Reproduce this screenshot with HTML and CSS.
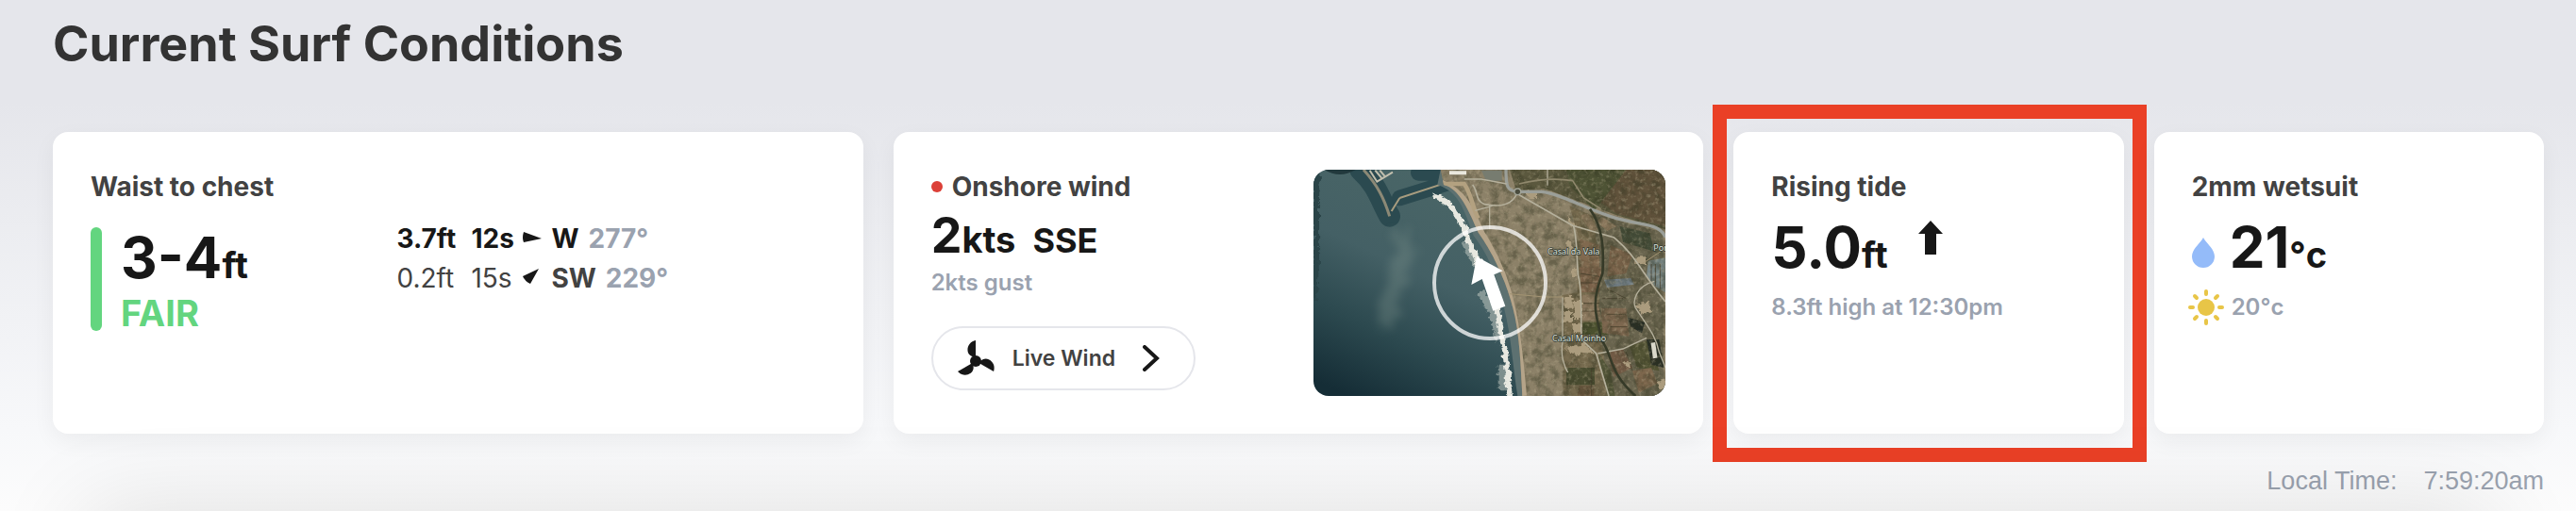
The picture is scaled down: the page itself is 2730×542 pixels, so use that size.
FILE: index.html
```html
<!DOCTYPE html>
<html lang="en">
<head>
  <meta charset="UTF-8">
  <meta name="viewport" content="width=device-width, initial-scale=1.0">
  <title>Current Surf Conditions</title>
  <link rel="stylesheet" href="styles.css">
</head>
<body>
<main class="conditions">
  <h1 class="page-title">Current Surf Conditions</h1>

  <div class="cards">
    <!-- Surf height -->
    <section class="card card-wide surf">
      <h2 class="card-title">Waist to chest</h2>
      <div class="surf-body">
        <div class="rating">
          <div class="rating-bar"></div>
          <div>
            <div class="reading">3-4<span class="unit">ft</span></div>
            <div class="rating-label">FAIR</div>
          </div>
        </div>
        <ul class="swells">
          <li class="swell primary">
            <span class="swell-height">3.7ft</span>
            <span class="swell-period">12s</span>
            <svg class="swell-arrow" viewBox="0 0 20 20"><path d="M1 4 L20 11 L1 15 Q-1 10 1 4Z"/></svg>
            <span class="swell-dir">W</span>
            <span class="degrees">277°</span>
          </li>
          <li class="swell">
            <span class="swell-height">0.2ft</span>
            <span class="swell-period">15s</span>
            <svg class="swell-arrow" viewBox="0 0 20 20"><path d="M17 1 L8 17 Q2 14 0 9Z"/></svg>
            <span class="swell-dir">SW</span>
            <span class="degrees">229°</span>
          </li>
        </ul>
      </div>
    </section>

    <!-- Wind -->
    <section class="card card-wide wind">
      <div class="wind-info">
        <h2 class="card-title"><span class="dot"></span>Onshore wind</h2>
        <div class="wind-reading">2<span class="unit">kts</span><span class="wind-dir">SSE</span></div>
        <div class="detail">2kts gust</div>
        <button class="live-wind" type="button">
          <svg class="fan" viewBox="0 0 40 38">
            <circle cx="19" cy="22" r="6"/>
            <path id="blade" d="M19 22 V0 C14 1 10 5 10.500 11 C11 15 14 17 17 17.500Z"/>
            <use href="#blade" transform="rotate(120 19 22)"/>
            <use href="#blade" transform="rotate(240 19 22)"/>
          </svg>
          Live Wind
          <svg class="chevron" viewBox="0 0 18 28"><path d="M2 2 L15 14 L2 26"/></svg>
        </button>
      </div>

      <svg class="map" viewBox="66 60 1119 720" preserveAspectRatio="xMidYMid slice">
        <defs>
          <linearGradient id="sea" x1="0.75" y1="0.1" x2="0.1" y2="1">
            <stop offset="0" stop-color="#4c6867"/>
            <stop offset="0.5" stop-color="#446065"/>
            <stop offset="0.75" stop-color="#2c494f"/>
            <stop offset="1" stop-color="#152d36"/>
          </linearGradient>
          <filter id="grain" x="0" y="0" width="100%" height="100%" color-interpolation-filters="sRGB">
            <feTurbulence type="fractalNoise" baseFrequency="0.035" numOctaves="4" seed="4"/>
            <feColorMatrix values="0 0 0 0 0.2  0 0 0 0 0.21  0 0 0 0 0.13  3 0 0 0 -1.2"/>
          </filter>
          <filter id="speckle" x="0" y="0" width="100%" height="100%" color-interpolation-filters="sRGB">
            <feTurbulence type="fractalNoise" baseFrequency="0.08" numOctaves="3" seed="9"/>
            <feColorMatrix values="0 0 0 0 0.74  0 0 0 0 0.7  0 0 0 0 0.58  0 3 0 0 -1.5"/>
          </filter>
          <filter id="rough" x="-20%" y="-20%" width="140%" height="140%" color-interpolation-filters="sRGB">
            <feTurbulence type="fractalNoise" baseFrequency="0.06" numOctaves="3" seed="2"/>
            <feDisplacementMap in="SourceGraphic" scale="22" xChannelSelector="R" yChannelSelector="G"/>
          </filter>
          <filter id="haze" x="-100%" y="-30%" width="300%" height="160%" color-interpolation-filters="sRGB">
            <feTurbulence type="fractalNoise" baseFrequency="0.03" numOctaves="4" seed="7"/>
            <feDisplacementMap in="SourceGraphic" scale="90" xChannelSelector="R" yChannelSelector="G"/>
            <feGaussianBlur stdDeviation="14"/>
          </filter>
          <clipPath id="land">
            <path d="M470 60 L480 108 C530 120 560 190 590 260 C640 330 680 420 700 500 C722 580 725 690 730 780 H1185 V60Z"/>
          </clipPath>
        </defs>

        <!-- Sea and harbour -->
        <rect x="66" y="60" width="1119" height="720" fill="url(#sea)"/>
        <path d="M66 60 H88 C78 200 92 320 76 480 H66Z" fill="#2a4448" filter="url(#rough)"/>
        <path d="M215 60 C270 110 280 160 308 208" fill="none" stroke="#2b4a50" stroke-width="68" stroke-linecap="round"/>
        <path d="M340 150 L500 100 M400 70 H470" fill="none" stroke="#2b4a50" stroke-width="50" stroke-linecap="round"/>
        <path d="M100 60 Q150 90 200 60Z" fill="#22393d"/>
        <path d="M225 60 C270 110 290 150 308 208" fill="none" stroke="#8c8976" stroke-width="9"/>
        <path d="M245 62 L268 98 L318 68 M262 62 L282 86 M277 62 L292 80" fill="none" stroke="#c2bfae" stroke-width="6"/>
        <path d="M340 150 L480 104 L560 84 M340 150 L314 192" fill="none" stroke="#a79c7f" stroke-width="6"/>
        <path d="M350 250 C370 320 330 400 310 480 C300 520 300 540 290 560" fill="none" stroke="#8da096" stroke-width="56" opacity="0.28" filter="url(#haze)"/>

        <!-- Land -->
        <path d="M470 60 L460 108 C530 130 545 190 575 270 C630 340 655 420 672 500 C695 590 700 690 715 780 H1185 V60Z" fill="#5d7171"/>
        <g clip-path="url(#land)">
          <rect x="460" y="60" width="725" height="720" fill="#8c8168"/>
          <path d="M690 60 H1185 V250 L1030 205 L800 120 L710 125Z" fill="#5b583e"/>
          <path d="M890 100 L1050 60 H1185 V240 L1030 200Z" fill="#60523b"/>
          <path d="M870 60 L1060 60 L960 190 L880 110Z" fill="#4e5335"/>
          <path d="M880 175 L960 210 L985 290 L985 600 L1010 780 H860 L855 460 L905 450 V260Z" fill="#766a4e"/>
          <path d="M960 200 L1180 260 V780 H1010 L980 600Z" fill="#69644e"/>

          <!-- Fields -->
          <path d="M1040 240 L1135 262 L1150 320 L1050 290Z" fill="#434b37"/>
          <path d="M912 280 L975 300 V370 H915Z" fill="#80694f"/>
          <path d="M912 370 L985 370 L975 450 H918Z" fill="#7b624a"/>
          <path d="M920 460 L960 455 L985 540 H922Z" fill="#8a775d"/>
          <path d="M922 545 L1000 545 V585 H922Z" fill="#4b512f"/>
          <path d="M1010 300 L1080 330 L1060 390 L1000 400Z" fill="#7b644b"/>
          <path d="M980 500 L1060 500 L1070 590 L985 580Z" fill="#7d674f"/>
          <path d="M1000 640 L1050 630 L1080 690 L1020 720Z" fill="#715a45"/>
          <path d="M1070 620 L1140 600 L1165 700 L1095 690Z" fill="#525334"/>
          <path d="M1080 700 L1140 690 L1160 740 L1100 770Z" fill="#7d674d"/>
          <path d="M870 690 L960 690 V745 H870Z" fill="#4a4d31"/>
          <path d="M910 748 H958 V780 H905Z" fill="#64533b"/>
          <path d="M970 640 L1010 700 L1025 780 H1000Z" fill="#535639"/>
          <path d="M940 200 L970 250 L945 255 L915 205Z M985 210 L1030 240 L1000 255 L965 225Z" fill="#8a775c"/>
          <path d="M1130 350 L1185 340 V450 L1150 430 L1125 400Z" fill="#798786"/>
          <path d="M990 410 L1075 405 L1085 425 L1000 435Z" fill="#75828a"/>
          <path d="M1065 530 L1120 545 L1110 580 L1075 560Z M1125 600 L1165 600 L1180 690 L1140 680Z" fill="#282e25"/>
          <g stroke="#463f2c" stroke-width="3" opacity="0.8">
            <path d="M920 485 H975 M920 510 H980 M985 470 H1050 M1000 520 H1060 M1010 560 H1065 M915 390 L975 400 M915 420 H970 M950 690 V780 M1060 640 L1080 700 M1000 440 L1060 470 M1140 360 V430 M1153 360 V430 M1168 360 V440"/>
          </g>

          <rect x="460" y="60" width="725" height="720" filter="url(#grain)" opacity="0.4"/>
          <rect x="460" y="60" width="725" height="720" filter="url(#speckle)" opacity="0.35"/>
          <rect x="1142" y="610" width="14" height="50" fill="#d9d8ca" transform="rotate(-8 1149 635)"/>

          <!-- Beach -->
          <path d="M470 108 C545 140 560 190 595 265 C640 335 675 420 692 500 C712 590 720 690 728 780" fill="none" stroke="#b5a489" stroke-width="32"/>
          <path d="M480 105 H545 C570 140 570 180 590 215" fill="none" stroke="#b3a180" stroke-width="14"/>

          <!-- Villages -->
          <g fill="#ab9c7e">
            <path d="M865 465 H890 V500 H865Z M893 480 H918 V535 H893Z M862 510 H888 V545 H862Z M890 550 H915 V580 H890Z M865 630 L930 615 L960 640 L900 650Z M888 375 H902 V400 H888Z M874 290 H886 V330 H874Z M870 200 L900 240 L885 245Z M1090 340 H1125 V358 H1090Z M1090 490 L1130 480 L1145 510 L1110 520Z M1055 670 H1075 V690 H1055Z M740 130 H780 V150 H750Z M1160 735 L1185 725 V755 H1165Z" filter="url(#rough)"/>
          </g>
          <path d="M498 64 H552 V76 H498Z" fill="#e9e7dd"/>
          <path d="M600 62 L615 95 H665 V62Z" fill="#777c70"/>

          <!-- Roads -->
          <g fill="none" stroke="#b5b09c">
            <path d="M678 60 C678 110 680 128 715 130 H790 C850 135 930 185 1030 215 C1120 240 1165 230 1185 275" stroke="#9b9f99" stroke-width="10"/>
            <path d="M715 130 C700 175 660 180 610 170 C580 160 590 130 572 108 M720 140 L890 238 L1020 275 C1090 330 1110 390 1185 480" stroke-width="5"/>
            <path d="M626 172 V250 M580 190 L635 175 M810 60 V110 M545 90 H600 L680 105" stroke-width="4"/>
            <path d="M720 105 C800 85 860 90 890 95 L925 150 L980 185" stroke="#90886d" stroke-width="5"/>
            <path d="M893 240 C905 280 903 360 908 400 C922 450 915 540 918 600 L965 645 L1005 780" stroke-width="5"/>
            <path d="M858 465 V610 C850 650 865 690 875 705 M970 645 L1050 630 L1125 595 M1150 415 C1090 430 1080 480 1090 500 C1130 560 1155 590 1165 640 L1185 690" stroke-width="4"/>
            <path d="M690 455 L800 465 H860 M1110 360 L1185 310" stroke="#a39473" stroke-width="3"/>
            <path d="M945 185 C985 240 990 310 985 390 C940 500 975 540 980 600 C1020 650 1000 700 1090 780" stroke="#363a28" stroke-width="8"/>
          </g>
          <circle cx="715" cy="130" r="10" fill="#4a4c3e" stroke="#a3a598" stroke-width="4"/>
        </g>

        <!-- Surf line -->
        <path d="M550 290 Q570 340 600 380 M595 450 Q640 500 655 600 M665 680 V760" fill="none" stroke="#c9cfc7" stroke-width="24" opacity="0.5" filter="url(#rough)"/>
        <path d="M445 145 C500 155 525 200 545 250 C565 310 590 350 620 410 C655 480 655 550 672 620 C685 680 680 730 692 790" fill="none" stroke="#e7e8e0" stroke-width="18" filter="url(#rough)"/>

        <g class="map-label">
          <text x="810" y="330">Casal da Vala</text>
          <text x="825" y="605">Casal Moinho</text>
          <text x="1147" y="317">Por</text>
        </g>

        <!-- Wind direction -->
        <circle cx="627" cy="420" r="177" fill="none" stroke="#fff" stroke-opacity="0.75" stroke-width="12"/>
        <path d="M585 337 L668 382 L640 394 L676 494 L637 509 L602 408 L568 426Z" fill="#fff"/>
      </svg>
    </section>

    <!-- Tide -->
    <section class="card tide">
      <h2 class="card-title">Rising tide</h2>
      <div class="reading">5.0<span class="unit">ft</span>
        <svg class="tide-arrow" viewBox="0 0 26 36"><path d="M13 0 L26 14 H19 V36 H7 V14 H0Z"/></svg>
      </div>
      <div class="detail">8.3ft high at 12:30pm</div>
      <div class="callout"></div>
    </section>

    <!-- Temperature -->
    <section class="card temperature">
      <h2 class="card-title">2mm wetsuit</h2>
      <div class="reading">
        <svg class="drop" viewBox="0 0 24 32"><path d="M12 0 C15 6 24 12 24 20 A12 12 0 0 1 0 20 C0 12 9 6 12 0Z"/></svg>
        21<span class="unit">°c</span>
      </div>
      <div class="detail">
        <svg class="sun" viewBox="0 0 38 38">
          <circle cx="19" cy="19" r="9"/>
          <path d="M19 2 V5 M19 33 V36 M2 19 H5 M33 19 H36 M7 7 L9 9 M29 29 L31 31 M7 31 L9 29 M29 9 L31 7"/>
        </svg>
        20°c
      </div>
    </section>
  </div>

  <div class="local-time"><span>Local Time:</span><time>7:59:20am</time></div>
</main>
</body>
</html>
```
FILE: styles.css
```css
* {
  box-sizing: border-box;
}
body {
  margin: 0;
  font-family: Inter, "Liberation Sans", sans-serif;
  color: #171717;
}
.conditions {
  position: relative;
  overflow: hidden;
  padding: 17px 34px 14px 56px;
  background: linear-gradient(to bottom, #e5e6eb 0%, #e5e6eb 20%, #f7f8fa 84%, #fcfcfc 100%);
}
/* shadow cast upwards by the section that follows */
.conditions::after {
  content: '';
  position: absolute;
  top: 100%;
  left: 90px;
  right: 90px;
  height: 200px;
  box-shadow: 0 0 100px rgba(0, 0, 0, 0.12);
}
.page-title {
  margin: 0 0 63px;
  font-size: 52px;
  line-height: 60px;
  font-weight: 700;
  color: #333;
}
.cards {
  display: grid;
  grid-template-columns: repeat(6, 1fr);
  gap: 32px;
}
.card {
  position: relative;
  min-height: 320px;
  padding: 40px;
  background: #fff;
  border-radius: 16px;
  box-shadow: 0 8px 24px rgba(0, 0, 0, 0.05);
}
.card-wide {
  grid-column: span 2;
}
.card-title {
  display: flex;
  align-items: center;
  gap: 10px;
  margin: 0;
  font-size: 28px;
  line-height: 36px;
  font-weight: 700;
  color: #424242;
}
.reading {
  display: flex;
  align-items: baseline;
  font-size: 60px;
  line-height: 64px;
  font-weight: 700;
}
.unit {
  font-size: 38px;
  line-height: 38px;
}
.detail {
  display: flex;
  align-items: center;
  font-size: 24px;
  line-height: 32px;
  font-weight: 600;
  color: #9aa2af;
}

/* Surf height */
.surf-body {
  display: grid;
  grid-template-columns: 5fr 7fr;
  align-items: start;
  margin-top: 16px;
}
.rating {
  display: flex;
  gap: 20px;
  height: 110px;
  margin-top: 9px;
}
.rating-bar {
  width: 12px;
  border-radius: 6px;
  background: #63d57f;
}
.rating-label {
  margin-top: 4px;
  font-size: 38px;
  line-height: 46px;
  font-weight: 700;
  color: #63d57f;
}
.swells {
  margin: 0;
  padding: 0;
  list-style: none;
}
.swell {
  display: flex;
  font-size: 28px;
  line-height: 42px;
  color: #424242;
}
.swell.primary {
  font-weight: 700;
  color: #171717;
}
.swell-height {
  width: 79px;
}
.swell-period {
  width: 55px;
}
.swell-arrow {
  width: 20px;
  height: 20px;
  margin: 10px 10px 0 0;
  fill: #171717;
}
.swell-dir {
  margin-right: 10px;
  font-weight: 700;
}
.degrees {
  font-weight: 700;
  color: #9aa2af;
}

/* Wind */
.wind {
  display: flex;
  justify-content: space-between;
}
.dot {
  width: 12px;
  height: 12px;
  border-radius: 50%;
  background: #dc4038;
}
.wind-reading {
  display: flex;
  align-items: baseline;
  margin: 6px 0;
  font-size: 52px;
  line-height: 56px;
  font-weight: 700;
}
.wind-dir {
  margin-left: 18px;
  font-size: 36px;
  line-height: 38px;
}
.live-wind {
  display: flex;
  align-items: center;
  width: 280px;
  height: 68px;
  margin-top: 30px;
  padding: 0 36px 0 26px;
  border: 2px solid #e5e6eb;
  border-radius: 34px;
  background: #fff;
  font: 600 23px/32px Inter, "Liberation Sans", sans-serif;
  color: #424242;
  cursor: pointer;
}
.fan {
  width: 40px;
  height: 38px;
  margin-right: 18px;
  fill: #171717;
}
.chevron {
  width: 18px;
  height: 28px;
  margin-left: auto;
  fill: none;
  stroke: #171717;
  stroke-width: 4;
  stroke-linecap: round;
}
.map {
  width: 373px;
  height: 240px;
  border-radius: 16px;
}
.map-label {
  font: 27px "Noto Sans", "Open Sans", sans-serif;
  fill: #dfe0d8;
  stroke: #2c3630;
  stroke-width: 4;
  paint-order: stroke;
}

/* Tide */
.tide .reading,
.temperature .reading {
  margin: 14px 0 16px;
}
.tide-arrow {
  align-self: flex-start;
  width: 26px;
  height: 36px;
  margin: 4px 0 0 32px;
  fill: #171717;
}
.callout {
  position: absolute;
  inset: -29px -24px -30px -22px;
  border: 15px solid #ea4026;
}

/* Temperature */
.drop {
  width: 24px;
  height: 32px;
  margin-right: 16px;
  fill: #94bbf9;
}
.sun {
  width: 38px;
  height: 38px;
  margin: -3px 8px -3px -4px;
  fill: #e8c547;
  stroke: #e8c547;
  stroke-width: 4;
  stroke-linecap: round;
}
.sun circle {
  stroke: none;
}

.local-time {
  display: flex;
  justify-content: flex-end;
  gap: 28px;
  margin-top: 32px;
  font-family: "Liberation Sans", sans-serif;
  font-size: 27px;
  line-height: 36px;
  color: #9aa2af;
}
```
